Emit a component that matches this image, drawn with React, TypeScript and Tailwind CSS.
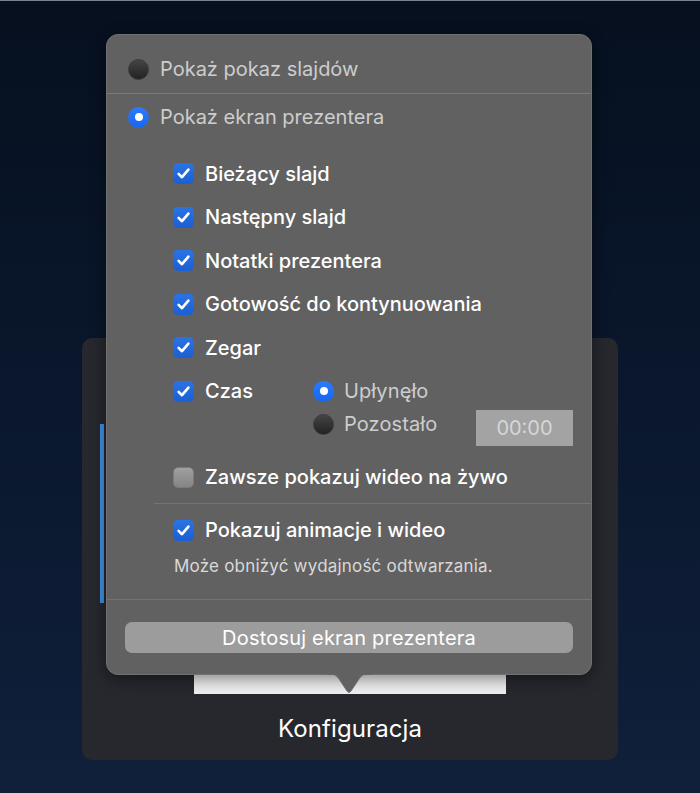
import React from "react";

const font = { fontFamily: "Inter, 'Noto Sans', sans-serif" };

function Check({ checked }: { checked: boolean }) {
  if (!checked) {
    return (
      <div className="w-[21px] h-[21px] shrink-0 rounded-[5px] bg-gradient-to-b from-[#a0a0a0] to-[#858585] border border-[#7a7a7a]" />
    );
  }
  return (
    <div className="w-[21px] h-[21px] shrink-0 rounded-[5px] bg-gradient-to-b from-[#2a73e6] to-[#1b5fd2] flex items-center justify-center">
      <svg width="15" height="15" viewBox="0 0 15 15">
        <path d="M2.6 7.9 L6 11.2 L12.4 3.6" fill="none" stroke="white" strokeWidth="2.6" strokeLinecap="round" strokeLinejoin="round" />
      </svg>
    </div>
  );
}

function Radio({ on }: { on: boolean }) {
  if (on) {
    return (
      <div className="w-[21px] h-[21px] shrink-0 rounded-full bg-gradient-to-b from-[#2a7bff] to-[#1667ee] flex items-center justify-center">
        <div className="w-[8px] h-[8px] rounded-full bg-white" />
      </div>
    );
  }
  return <div className="w-[21px] h-[21px] shrink-0 rounded-full bg-gradient-to-b from-[#454545] to-[#222222] border border-[#3a3a3a]" />;
}

function CheckRow({ label, checked = true }: { label: string; checked?: boolean }) {
  return (
    <div className="h-[43.5px] flex items-center pl-[66px] gap-[11px]">
      <Check checked={checked} />
      <span className="text-[20px] font-medium text-white">{label}</span>
    </div>
  );
}

export default function App() {
  return (
    <div className="relative w-[700px] h-[793px] overflow-hidden bg-gradient-to-b from-[#06101f] via-[#0a172d] to-[#10203b] border-t border-[#7d838c]" style={font}>
      <div className="pt-[337px] pl-[82px]">
        <div className="relative w-[536px] h-[422px] rounded-[10px] bg-[#26282e] flex flex-col items-center justify-end pb-[16px]">
          <div className="absolute left-[18px] top-[86px] w-[4px] h-[179px] bg-[#3f90e2]" />
          <div className="w-[312px] h-[60px] bg-[#efefef]" />
          <div className="mt-[20px] text-[24px] text-white tracking-[0.1px] leading-[30px]">Konfiguracja</div>
        </div>
      </div>

      {/* popover */}
      <div className="absolute left-[106px] top-[33px] w-[486px] h-[641px] rounded-[12px] bg-[#616161] border border-[#717171] shadow-[0_4px_16px_rgba(0,0,0,0.45)]">
        <div className="h-[58px] pt-[10px] flex items-center pl-[21px] gap-[11px]">
          <Radio on={false} />
          <span className="text-[20px] text-[#cdcdcd]">Pokaż pokaz slajdów</span>
        </div>
        <div className="h-px bg-[#7a7a7a]" />
        <div className="h-[46px] flex items-center pl-[21px] gap-[11px]">
          <Radio on={true} />
          <span className="text-[20px] text-[#cdcdcd]">Pokaż ekran prezentera</span>
        </div>

        <div className="pt-[11.75px]">
          <CheckRow label="Bieżący slajd" />
          <CheckRow label="Następny slajd" />
          <CheckRow label="Notatki prezentera" />
          <CheckRow label="Gotowość do kontynuowania" />
          <CheckRow label="Zegar" />

          <div className="h-[86px] flex items-start">
            <div className="h-[43.5px] w-[206px] flex items-center pl-[66px] gap-[11px]">
              <Check checked={true} />
              <span className="text-[20px] font-medium text-white">Czas</span>
            </div>
            <div className="flex flex-col pt-[5.25px]">
              <div className="h-[33px] flex items-center gap-[10px]">
                <Radio on={true} />
                <span className="text-[20px] text-[#cdcdcd] tracking-[0.1px]">Upłynęło</span>
              </div>
              <div className="h-[33px] flex items-center gap-[10px]">
                <Radio on={false} />
                <span className="text-[20px] text-[#cdcdcd] tracking-[0.1px]">Pozostało</span>
              </div>
            </div>
            <div className="ml-auto mr-[18px] mt-[40.75px] w-[97px] h-[36px] bg-[#a3a3a3] flex items-center justify-center text-[20px] text-[#d6d6d6]">
              00:00
            </div>
          </div>

          <CheckRow label="Zawsze pokazuj wideo na żywo" checked={false} />
          <div className="mt-[3.75px] ml-[47px] h-px bg-[#747474]" />
          <div className="mt-[4.75px]">
            <CheckRow label="Pokazuj animacje i wideo" />
          </div>
          <div className="mt-[5.25px] h-[20px] flex items-center pl-[67px] text-[17px] tracking-[0.2px] text-[#d9d9d9]">
            Może obniżyć wydajność odtwarzania.
          </div>
          <div className="mt-[21.5px] h-px bg-[#747474]" />
          <div className="mt-[22.5px] mx-[18px] h-[31px] rounded-[7px] bg-[#9c9c9c] flex items-center justify-center text-[20px] text-white tracking-[0.2px]">
            Dostosuj ekran prezentera
          </div>
        </div>

        {/* arrow */}
        <svg className="absolute left-[220px] top-[639px]" width="44" height="22" viewBox="0 0 44 22">
          <path d="M0 0 L4 0 Q8 0 11 3.5 L20 17 Q22 20 24 17 L33 3.5 Q36 0 40 0 L44 0 Z" fill="#616161" stroke="#717171" strokeWidth="1" />
          <rect x="0" y="-1" width="44" height="1.6" fill="#616161" />
        </svg>
      </div>
    </div>
  );
}
